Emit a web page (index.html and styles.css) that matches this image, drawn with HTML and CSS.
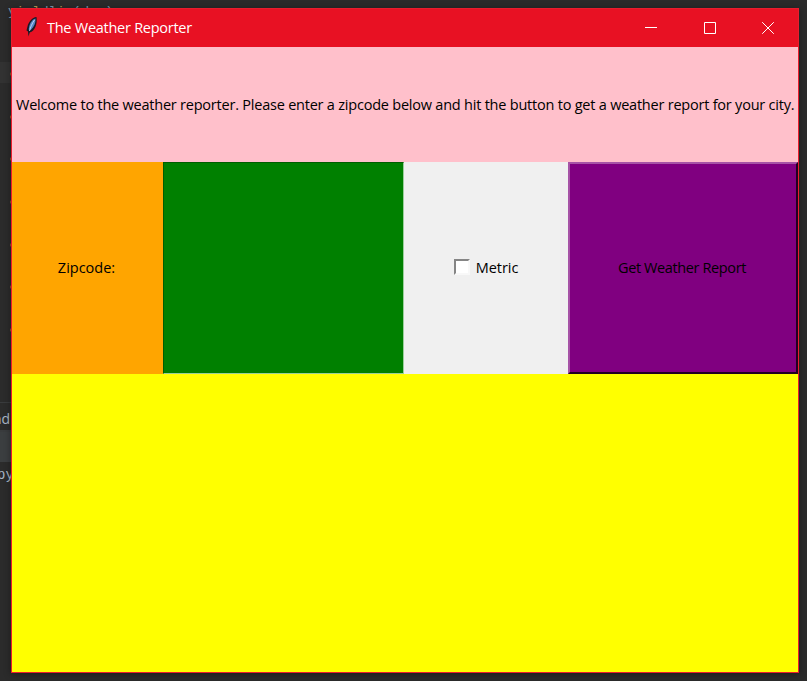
FILE: index.html
```html
<!DOCTYPE html>
<html lang="en">
<head>
<meta charset="utf-8">
<title>The Weather Reporter</title>
<link rel="stylesheet" href="styles.css">
</head>
<body>
<div class="editor" aria-hidden="true">
  <span class="code-top">y<i>i</i>e<i>l</i>dl<i>i</i>n(da<i>y</i>)</span>
  <div class="active-line"></div>
  <div class="gutter"><i></i><i></i><i></i><i></i><i></i><i></i><i></i></div>
  <div class="tab">nd</div>
  <div class="toolbar"></div>
  <div class="console">py</div>
</div>
<main class="window">
  <header class="titlebar">
    <svg class="feather" width="12" height="20" viewBox="0 0 12 20">
      <path d="M10.500 0C6 .5 2.500 5 1.500 9.500L.5 13.500l1.500 1L2.500 19.500l1.200-4C9 14 11.500 7 10.500 0Z" fill="#171a26"/>
      <path d="M9.500 1.500C6 2.500 3.200 7 2.700 12.500l2 .5C8.200 10 9.800 6 9.500 1.500Z" fill="#5685c6"/>
      <path d="M8.500 3C6 6.500 4.500 10 3.500 14" fill="none" stroke="#c4dcf4" stroke-width=".9"/>
    </svg>
    <h1>The Weather Reporter</h1>
    <div class="controls">
      <svg width="12" height="12" viewBox="0 0 12 12"><path d="M0 5.500h12"/></svg>
      <svg width="12" height="12" viewBox="0 0 12 12"><path d="M.5.500h11v11H.5z"/></svg>
      <svg width="12" height="12" viewBox="0 0 12 12"><path d="M.2.200l11.600 11.600M11.800.200L.2 11.800"/></svg>
    </div>
  </header>
  <section class="welcome"><p>Welcome to the weather reporter. Please enter a zipcode below and hit the button to get a weather report for your city.</p></section>
  <section class="form">
    <label class="zip-label" for="zip">Zipcode:</label>
    <input class="zip" id="zip" type="text">
    <label class="metric"><input type="checkbox"><span>Metric</span></label>
    <button class="report" type="button"><span>Get Weather Report</span></button>
  </section>
  <section class="output"></section>
</main>
</body>
</html>
```
FILE: styles.css
```css
* { box-sizing: border-box; }
body {
  margin: 0;
  width: 807px;
  height: 681px;
  overflow: hidden;
  position: relative;
  background: #2b2b2b;
  padding: 8px 8px 8px 11px;
  font-family: "Open Sans", "Noto Sans", sans-serif;
  font-size: 14.500px;
  color: #000;
}
.editor {
  position: absolute;
  inset: 0;
  color: #a9b7c6;
  font-family: "Liberation Mono", monospace;
}
.editor > * { position: absolute; white-space: nowrap; }
.code-top { left: 8px; top: 4px; font-size: 13.500px; color: #829ab0; }
.code-top i { font-style: normal; color: #b99a58; }
.active-line { left: 0; top: 62px; width: 11px; height: 21px; background: #323232; }
.gutter {
  left: 10px;
  top: 72px;
  height: 260px;
  display: flex;
  flex-direction: column;
  justify-content: space-between;
}
.gutter i { width: 4px; height: 4px; border-radius: 50%; background: #9b6127; }
.tab {
  left: 0;
  top: 402px;
  width: 11px;
  height: 30px;
  border-top: 1px solid #393b3d;
  border-bottom: 2px solid #393b3d;
  font: 14px/31px "Open Sans", sans-serif;
  text-indent: -7px;
}
.toolbar { left: 0; top: 432px; width: 11px; height: 30px; background: #3b3e40; }
.console { left: -3px; top: 467px; font-size: 14px; }
.window {
  position: relative;
  width: 788px;
  height: 665px;
  display: flex;
  flex-direction: column;
  border: 1px solid #e91d2d;
  background: #ff0;
  box-shadow: 0 1px 7px rgba(0, 0, 0, .4);
}
.titlebar {
  display: flex;
  align-items: center;
  flex: 0 0 38px;
  padding: 0 24px 0 14px;
  background: #e81123;
  color: #fff;
}
.feather { margin-top: -2px; }
h1 { margin: -1px auto 0 9px; font-size: 14.500px; font-weight: 400; letter-spacing: -.26px; }
.controls { display: flex; gap: 46.500px; }
.controls svg { fill: none; stroke: #fff; stroke-width: 1; }
.welcome {
  flex: 0 0 115px;
  display: flex;
  align-items: center;
  background: #ffc0cb;
}
.welcome p { margin: 0 0 0 4px; white-space: nowrap; letter-spacing: -.22px; }
.form {
  flex: 0 0 212px;
  display: grid;
  grid-template-columns: 151px 241px 164px 230px;
}
.zip-label {
  display: flex;
  align-items: center;
  justify-content: center;
  padding: 0 2px 2px 0;
  background: #ffa500;
  letter-spacing: 0;
}
.zip {
  width: 100%;
  height: 100%;
  outline: 0;
  border: 1px solid;
  border-color: #005e00 #9bcf9b #9bcf9b #005e00;
  background: #008000;
}
.metric {
  display: flex;
  align-items: center;
  justify-content: center;
  gap: 6px;
  padding-bottom: 2px;
  background: #f0f0f0;
  letter-spacing: -.05px;
}
.metric input {
  appearance: none;
  margin: 0;
  width: 16px;
  height: 16px;
  background: #fff;
  border: 2px solid;
  border-color: #858585 #f8f8f8 #f8f8f8 #858585;
}
.report {
  border: 2px solid;
  border-color: #a653a6 #210021 #210021 #a653a6;
  padding: 0 2px 2px 0;
  background: #800080;
  color: #000;
  font: inherit;
  letter-spacing: -.38px;
}
.output { flex: 1; background: #ff0; }
```
